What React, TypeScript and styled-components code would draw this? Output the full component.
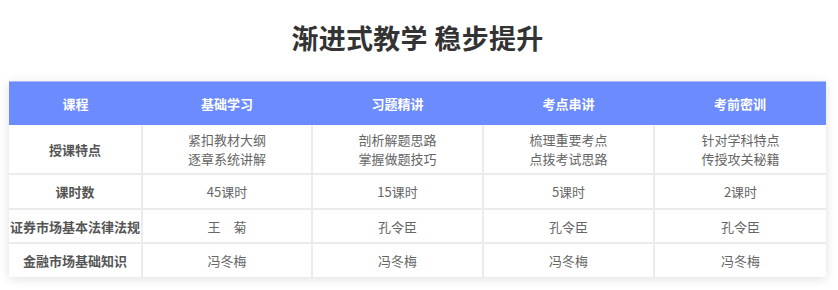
import styled, { createGlobalStyle } from "styled-components";

const GlobalStyle = createGlobalStyle`
    html, body {
        margin: 0;
        padding: 0;
        background: #ffffff;
        font-family: "Noto Sans CJK SC", "Noto Sans", sans-serif;
    }
`;

const Swrap = styled.div`
    width: 838px;
    height: 290px;
    padding: 16px 0 0 9px;
    box-sizing: border-box;
`;
const Stitle = styled.h2`
    margin: 0 0 21px 0;
    width: 817px;
    height: 44px;
    line-height: 44px;
    text-align: center;
    font-size: 27px;
    font-weight: 700;
    color: #333333;
    letter-spacing: 0.3px;
`;
const Stable = styled.table`
    width: 817px;
    table-layout: fixed;
    border-collapse: collapse;
    box-shadow: 0 2px 10px rgba(0, 0, 0, 0.12);
    background: #ffffff;
`;
const Sth = styled.th`
    height: 43px;
    padding: 0;
    background: #6b8bff;
    border-top: 1px solid #a9bcff;
    color: #ffffff;
    font-size: 13px;
    font-weight: 700;
    text-align: center;
`;
const Std = styled.td<{ $head?: boolean; $h: number }>`
    height: ${(p) => p.$h}px;
    padding: 0;
    border: 2px solid #ebebeb;
    border-top: none;
    text-align: center;
    font-size: 13px;
    line-height: 19px;
    font-weight: ${(p) => (p.$head ? 700 : 400)};
    color: ${(p) => (p.$head ? "#555555" : "#666666")};
    &:first-child { border-left: none; }
    &:last-child { border-right: none; }
`;
const Str = styled.tr`
    &:last-child td { border-bottom: none; }
`;

const heads = ["课程", "基础学习", "习题精讲", "考点串讲", "考前密训"];
const widths = [133, 170, 171, 171, 172];

const rows: { label: string; h: number; cells: string[][] }[] = [
    {
        label: "授课特点",
        h: 48,
        cells: [
            ["紧扣教材大纲", "逐章系统讲解"],
            ["剖析解题思路", "掌握做题技巧"],
            ["梳理重要考点", "点拨考试思路"],
            ["针对学科特点", "传授攻关秘籍"],
        ],
    },
    { label: "课时数", h: 33, cells: [["45课时"], ["15课时"], ["5课时"], ["2课时"]] },
    { label: "证券市场基本法律法规", h: 32, cells: [["王\u3000菊"], ["孔令臣"], ["孔令臣"], ["孔令臣"]] },
    { label: "金融市场基础知识", h: 33, cells: [["冯冬梅"], ["冯冬梅"], ["冯冬梅"], ["冯冬梅"]] },
];

const App = () => {
    return (
        <>
            <GlobalStyle />
            <Swrap>
                <Stitle>渐进式教学 稳步提升</Stitle>
                <Stable>
                    <colgroup>
                        {widths.map((w, i) => (
                            <col key={i} style={{ width: w }} />
                        ))}
                    </colgroup>
                    <thead>
                        <tr>
                            {heads.map((h) => (
                                <Sth key={h}>{h}</Sth>
                            ))}
                        </tr>
                    </thead>
                    <tbody>
                        {rows.map((row) => (
                            <Str key={row.label}>
                                <Std $head $h={row.h}>{row.label}</Std>
                                {row.cells.map((lines, i) => (
                                    <Std key={i} $h={row.h}>
                                        {lines.map((l, j) => (
                                            <div key={j}>{l}</div>
                                        ))}
                                    </Std>
                                ))}
                            </Str>
                        ))}
                    </tbody>
                </Stable>
            </Swrap>
        </>
    );
};

export default App;
